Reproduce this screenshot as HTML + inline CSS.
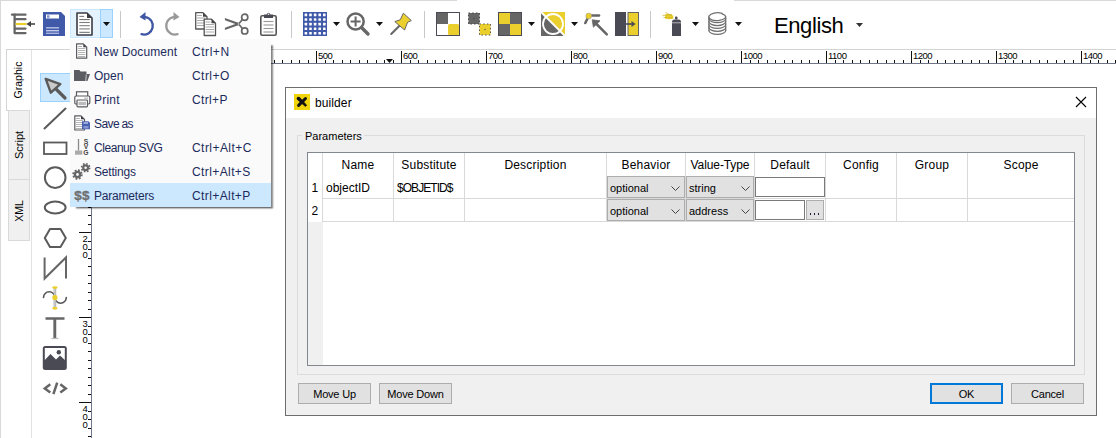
<!DOCTYPE html>
<html><head><meta charset="utf-8">
<style>
html,body{margin:0;padding:0;}
body{width:1116px;height:438px;overflow:hidden;background:#fff;position:relative;font-family:"Liberation Sans",sans-serif;font-size:12px;color:#000;}
.abs{position:absolute;}
div,span{box-sizing:border-box;}
.t{position:absolute;white-space:nowrap;line-height:1;}
svg{position:absolute;overflow:visible;}
.vt{font-size:11px;transform:translate(-50%,-50%) rotate(-90deg);transform-origin:center center;}
.rl{font-size:9.5px;color:#000;letter-spacing:-0.5px;}
.mi{font-size:12px;line-height:12px;color:#1c2a5c;}
.tah{font-size:11px;line-height:12px;}
.hd{font-size:12px;line-height:14px;text-align:center;letter-spacing:0.2px;}
.cell{font-size:12px;line-height:14px;}
.cb{background:#e1e1e1;border:1px solid #adadad;}
.bt{text-align:center;letter-spacing:-0.2px;}
</style></head><body>
<!-- window frame edges -->
<div class="abs" style="left:0;top:0;width:1px;height:438px;background:#d9d9d9"></div>

<!-- TOOLBAR placeholder -->
<div id="toolbar">
<!-- top edge lines -->
<div class="abs" style="left:0;top:0;width:457px;height:1px;background:#d9d9d9"></div>
<div class="abs" style="left:734px;top:0;width:382px;height:1px;background:#d9d9d9"></div>
<!-- toolbar separators -->
<div class="abs" style="left:120px;top:11px;width:1px;height:27px;background:#c9c9c9"></div>
<div class="abs" style="left:291px;top:11px;width:1px;height:27px;background:#c9c9c9"></div>
<div class="abs" style="left:424px;top:11px;width:1px;height:27px;background:#c9c9c9"></div>
<div class="abs" style="left:650px;top:11px;width:1px;height:27px;background:#c9c9c9"></div>

<!-- icon1: align list -->
<svg style="left:11px;top:12px" width="25" height="24" viewBox="0 0 25 24">
 <g stroke="#666" stroke-width="2.300" stroke-linecap="round" fill="none">
  <path d="M1 2.7H14.5"/><path d="M4 7.2H14.5"/><path d="M4 16.6H14.5"/><path d="M4 21.1H14.5"/><path d="M3.6 2.7V21.1"/>
 </g>
 <path d="M4.5 12H15.5" stroke="#ebcf2c" stroke-width="2.2" fill="none"/>
 <path d="M15.3 12L20 9V15Z" fill="#444"/><path d="M19 12H24" stroke="#444" stroke-width="1.6"/>
</svg>
<!-- icon2: save -->
<svg style="left:43px;top:12px" width="22" height="24" viewBox="0 0 22 24">
 <path d="M0 0H18L22 4V24H0Z" fill="#4059a9"/>
 <rect x="3" y="2.5" width="13" height="4" fill="#fff"/><rect x="4" y="3.3" width="2.5" height="2.5" fill="#7f92cc"/>
 <rect x="3" y="15" width="13" height="1.6" fill="#aab6e0"/><rect x="3" y="18" width="13" height="1.4" fill="#c5cdea"/><rect x="3" y="20.6" width="13" height="1.4" fill="#aab6e0"/>
</svg>
<!-- doc split button -->
<div class="abs" style="left:70px;top:9px;width:31px;height:29px;background:#e5f3ff;border:1px solid #cce8ff;border-right:none"></div>
<div class="abs" style="left:100px;top:9px;width:13px;height:29px;background:#cce8ff;border:1px solid #99d1ff"></div>
<svg style="left:76px;top:12px" width="17" height="24" viewBox="0 0 17 24">
 <path d="M1 1H11L16 6V23H1Z" fill="#fff" stroke="#3b3b44" stroke-width="1.6" stroke-linejoin="round"/>
 <path d="M11 1L16 6H11Z" fill="#3b3b44"/>
 <g stroke="#808080" stroke-width="1.100"><path d="M3.300 4.400H8.200"/><path d="M3.300 7.600H13.800" stroke="#555" stroke-width="0.900"/><path d="M3.300 10.500H13.800"/><path d="M3.300 13.700H13.800" stroke="#666" stroke-width="0.900"/><path d="M3.300 16.900H13.800" stroke="#999" stroke-width="1.400"/><path d="M3.300 20.300H13.800" stroke="#555" stroke-width="0.900"/></g>
</svg>
<svg style="left:103px;top:22px" width="7" height="4" viewBox="0 0 7 4"><path d="M0 0H7L3.5 4Z" fill="#111"/></svg>

<!-- undo -->
<svg style="left:139px;top:12px" width="16" height="24" viewBox="0 0 16 24">
 <path d="M6.500 5.200A8.750 8.750 0 1 1 2.500 22.200" fill="none" stroke="#3f56a5" stroke-width="2.300" stroke-linecap="round"/>
 <path d="M0.5 5L6.5 0V8.5Z" fill="#3f56a5"/>
</svg>
<!-- redo -->
<svg style="left:164px;top:12px" width="16" height="24" viewBox="0 0 16 24">
 <path d="M9.500 5.200A8.750 8.750 0 1 0 13.500 22.200" fill="none" stroke="#999" stroke-width="2.300" stroke-linecap="round"/>
 <path d="M15.5 5L9.500 0V8.500Z" fill="#999"/>
</svg>
<!-- copy -->
<svg style="left:195px;top:12px" width="21" height="24" viewBox="0 0 21 24">
 <g>
 <path d="M0.700 0.700H8L12 4.700V17H0.700Z" fill="#fff" stroke="#555" stroke-width="1.3" stroke-linejoin="round"/>
 <path d="M8 0.700L12 4.700H8Z" fill="#444"/>
 <g stroke="#aaa" stroke-width="1"><path d="M2 3.500H7"/><path d="M2 6H10.500"/><path d="M2 8.500H10.500"/><path d="M2 11H10.500"/><path d="M2 13.500H10.500"/></g>
 </g>
 <g transform="translate(8.500,6.500)">
 <path d="M0.700 0.700H8L12 4.700V17H0.700Z" fill="#fff" stroke="#555" stroke-width="1.3" stroke-linejoin="round"/>
 <path d="M8 0.700L12 4.700H8Z" fill="#444"/>
 <g stroke="#aaa" stroke-width="1"><path d="M2 3.500H7"/><path d="M2 6H10.500"/><path d="M2 8.500H10.500"/><path d="M2 11H10.500"/><path d="M2 13.500H10.500"/></g>
 </g>
</svg>
<!-- scissors -->
<svg style="left:224px;top:13px" width="25" height="22" viewBox="0 0 25 22">
 <g fill="none" stroke="#666" stroke-width="1.700">
 <circle cx="20.700" cy="4.200" r="3.100"/><circle cx="20.700" cy="17.900" r="3.100"/>
 </g>
 <path d="M0.800 5.100L15.800 10.300L14.600 12.300L1 7.200Z" fill="#666"/>
 <path d="M0.800 16.900L15.800 11.700L14.600 9.700L1 14.800Z" fill="#666"/>
 <path d="M14.800 10.800L18.600 6.300M14.800 11.200L18.600 15.700" stroke="#666" stroke-width="1.700" fill="none"/>
 <circle cx="14.600" cy="11" r="0.700" fill="#ddd"/>
</svg>
<!-- clipboard -->
<svg style="left:260px;top:12px" width="17" height="24" viewBox="0 0 17 24">
 <rect x="0.800" y="3.800" width="15.400" height="19.400" rx="1.500" fill="#fff" stroke="#555" stroke-width="1.600"/>
 <path d="M4 2.500H6.500Q8.500 -1 10.500 2.500H13V6H4Z" fill="#4a4a55"/>
 <circle cx="8.500" cy="2.300" r="0.800" fill="#fff"/>
 <g stroke="#999" stroke-width="1.100"><path d="M3.500 9.500H13.500"/><path d="M3.500 13H13.500"/><path d="M3.500 16.500H13.500"/><path d="M3.500 20H13.500"/></g>
</svg>
<!-- grid -->
<svg style="left:303px;top:12px" width="24" height="24" viewBox="0 0 24 24">
 <rect width="24" height="24" fill="#4059a9"/>
 <rect x="1.6" y="1.6" width="2.6" height="2.6" rx="0.5" fill="#fff"/><rect x="1.6" y="6.2" width="2.6" height="2.6" rx="0.5" fill="#fff"/><rect x="1.6" y="10.8" width="2.6" height="2.6" rx="0.5" fill="#fff"/><rect x="1.6" y="15.4" width="2.6" height="2.6" rx="0.5" fill="#fff"/><rect x="1.6" y="20.0" width="2.6" height="2.6" rx="0.5" fill="#fff"/><rect x="6.2" y="1.6" width="2.6" height="2.6" rx="0.5" fill="#fff"/><rect x="6.2" y="6.2" width="2.6" height="2.6" rx="0.5" fill="#fff"/><rect x="6.2" y="10.8" width="2.6" height="2.6" rx="0.5" fill="#fff"/><rect x="6.2" y="15.4" width="2.6" height="2.6" rx="0.5" fill="#fff"/><rect x="6.2" y="20.0" width="2.6" height="2.6" rx="0.5" fill="#fff"/><rect x="10.8" y="1.6" width="2.6" height="2.6" rx="0.5" fill="#fff"/><rect x="10.8" y="6.2" width="2.6" height="2.6" rx="0.5" fill="#fff"/><rect x="10.8" y="10.8" width="2.6" height="2.6" rx="0.5" fill="#fff"/><rect x="10.8" y="15.4" width="2.6" height="2.6" rx="0.5" fill="#fff"/><rect x="10.8" y="20.0" width="2.6" height="2.6" rx="0.5" fill="#fff"/><rect x="15.4" y="1.6" width="2.6" height="2.6" rx="0.5" fill="#fff"/><rect x="15.4" y="6.2" width="2.6" height="2.6" rx="0.5" fill="#fff"/><rect x="15.4" y="10.8" width="2.6" height="2.6" rx="0.5" fill="#fff"/><rect x="15.4" y="15.4" width="2.6" height="2.6" rx="0.5" fill="#fff"/><rect x="15.4" y="20.0" width="2.6" height="2.6" rx="0.5" fill="#fff"/><rect x="20.0" y="1.6" width="2.6" height="2.6" rx="0.5" fill="#fff"/><rect x="20.0" y="6.2" width="2.6" height="2.6" rx="0.5" fill="#fff"/><rect x="20.0" y="10.8" width="2.6" height="2.6" rx="0.5" fill="#fff"/><rect x="20.0" y="15.4" width="2.6" height="2.6" rx="0.5" fill="#fff"/><rect x="20.0" y="20.0" width="2.6" height="2.6" rx="0.5" fill="#fff"/>
</svg>
<svg style="left:333px;top:22px" width="7" height="4" viewBox="0 0 7 4"><path d="M0 0H7L3.500 4Z" fill="#111"/></svg>
<!-- zoom -->
<svg style="left:346px;top:12px" width="24" height="24" viewBox="0 0 24 24">
 <circle cx="9.600" cy="9.500" r="8.100" fill="none" stroke="#666" stroke-width="2.500"/>
 <path d="M9.600 4.500V14.500M4.600 9.500H14.600" stroke="#666" stroke-width="2" fill="none"/>
 <path d="M15.500 15.500L22 22" stroke="#666" stroke-width="3.400" stroke-linecap="round"/>
</svg>
<svg style="left:376px;top:22px" width="7" height="4" viewBox="0 0 7 4"><path d="M0 0H7L3.500 4Z" fill="#111"/></svg>
<!-- pin -->
<svg style="left:390px;top:12px" width="23" height="24" viewBox="0 0 23 24">
 <path d="M1.200 22L9.500 13.700" stroke="#666" stroke-width="2" stroke-linecap="round"/>
 <path d="M13.400 1.200L21.300 8.600L17.600 10.200L14.600 18L4.800 9.600L10.200 7.800Z" fill="#ebcf2c" stroke="#666" stroke-width="1" stroke-linejoin="round"/>
</svg>

<!-- icon A: checker white -->
<svg style="left:436px;top:12px" width="24" height="24" viewBox="0 0 24 24">
 <rect x="0.500" y="0.500" width="23" height="23" fill="#fff" stroke="#4a4a55" stroke-width="1"/>
 <rect x="1" y="1" width="11" height="11" fill="#666"/>
 <rect x="12" y="12" width="11" height="11" rx="1.500" fill="#ebcf2c"/>
</svg>
<!-- icon B: two dotted squares -->
<svg style="left:468px;top:12px" width="23" height="24" viewBox="0 0 23 24">
 <rect x="0.500" y="1" width="11" height="11" fill="#666"/>
 <rect x="0.500" y="1" width="11" height="11" fill="none" stroke="#444" stroke-width="1" stroke-dasharray="1.500 2.200"/>
 <rect x="11.500" y="12" width="11" height="11" fill="#ebcf2c"/>
 <rect x="11.500" y="12" width="11" height="11" fill="none" stroke="#555" stroke-width="1" stroke-dasharray="1.500 2.200"/>
 <circle cx="6" cy="6.500" r="0.700" fill="#444"/><circle cx="17" cy="17.500" r="0.700" fill="#555"/>
</svg>
<!-- icon C: checker yellow/grey -->
<svg style="left:498px;top:12px" width="24" height="24" viewBox="0 0 24 24">
 <rect x="0.500" y="0.500" width="23" height="23" fill="#666" stroke="#4a4a55" stroke-width="1"/>
 <rect x="1" y="1" width="11" height="11" fill="#ebcf2c"/>
 <rect x="12" y="12" width="11" height="11" fill="#ebcf2c"/>
</svg>
<svg style="left:528px;top:22px" width="7" height="4" viewBox="0 0 7 4"><path d="M0 0H7L3.500 4Z" fill="#111"/></svg>
<!-- icon D: circle diag -->
<svg style="left:541px;top:12px" width="24" height="24" viewBox="0 0 24 24">
 <path d="M0 0H24V24Z" fill="#ebcf2c"/><path d="M0 0V24H24Z" fill="#666"/>
 <circle cx="12" cy="12" r="10" fill="none" stroke="#fff" stroke-width="1.800"/>
 <path d="M0 0L24 24" stroke="#fff" stroke-width="1.800"/>
</svg>
<svg style="left:571px;top:22px" width="7" height="4" viewBox="0 0 7 4"><path d="M0 0H7L3.500 4Z" fill="#111"/></svg>
<!-- icon E: snap cursor -->
<svg style="left:584px;top:12px" width="24" height="24" viewBox="0 0 24 24">
 <path d="M5 3.500H15" stroke="#666" stroke-width="2.600" stroke-linecap="round"/>
 <path d="M4.500 4.500L1.300 11" stroke="#666" stroke-width="2.600" stroke-linecap="round"/>
 <circle cx="4.700" cy="4" r="2.900" fill="#ebcf2c" stroke="#999" stroke-width="0.500"/>
 <path d="M8.200 7.800L16 8.800L9.400 15.200Z" fill="#666" stroke="#666" stroke-width="0.800" stroke-linejoin="round"/>
 <path d="M12 11.500L22.800 22.300" stroke="#666" stroke-width="2.500" stroke-linecap="round"/>
</svg>
<!-- icon F -->
<svg style="left:615px;top:12px" width="24" height="24" viewBox="0 0 24 24">
 <rect x="0" y="0" width="11" height="24" fill="#4a4a55"/>
 <rect x="13" y="0.500" width="10.500" height="23" fill="#ebcf2c" stroke="#666" stroke-width="1"/>
 <path d="M11 12H17" stroke="#4a4a55" stroke-width="1.600"/><path d="M16.500 9L20.500 12L16.500 15Z" fill="#4a4a55"/>
</svg>
<!-- spray -->
<svg style="left:662px;top:12px" width="20" height="24" viewBox="0 0 20 24">
 <path d="M3 2.500Q8 1 11 3.500L11.500 6.500Q7 8 3 6.500Z" fill="#ebcf2c"/>
 <g stroke="#c9b124" stroke-width="0.700" fill="none"><path d="M0.500 3.500L10 2.500"/><path d="M1.500 5.500L11 5.800"/><path d="M3.500 0.500L10 4"/></g>
 <rect x="13" y="4.500" width="2.500" height="3" rx="1" fill="#4a4a55"/>
 <path d="M10 10Q10 7.500 12.500 7.500H16.500Q19 7.500 19 10V24H10Z" fill="#4a4a55"/>
 <path d="M10 10.800H19" stroke="#fff" stroke-width="0.600"/>
</svg>
<svg style="left:692px;top:22px" width="7" height="4" viewBox="0 0 7 4"><path d="M0 0H7L3.500 4Z" fill="#111"/></svg>
<!-- spring -->
<svg style="left:708px;top:12px" width="19" height="24" viewBox="0 0 19 24">
 <g fill="none" stroke="#707070" stroke-width="1.250" stroke-linecap="round">
  <path d="M14.200 1.300Q8 -0.500 3 2.200Q-0.500 4.300 1.500 6.500Q4.500 9.300 11 8.400Q17.500 7.200 17.700 4.800Q17.500 2.800 14 1.800"/>
  <path d="M0.900 6.7A8.400 3.900 0 0 0 17.700 6.7"/><path d="M0.900 9.6A8.400 3.900 0 0 0 17.700 9.6"/><path d="M0.900 12.5A8.400 3.900 0 0 0 17.700 12.5"/><path d="M0.900 15.4A8.400 3.900 0 0 0 17.700 15.4"/><path d="M0.900 18.5A8.400 3.900 0 0 0 17.700 18.5"/>
  <path d="M0.900 4.800V18.500M17.700 4.800V18.500"/>
 </g>
</svg>
<svg style="left:735px;top:22px" width="7" height="4" viewBox="0 0 7 4"><path d="M0 0H7L3.500 4Z" fill="#111"/></svg>
<!-- English -->
<div class="t" id="eng" style="left:774px;top:14px;font-size:22px;line-height:24px;letter-spacing:-0.4px;">English</div>
<svg style="left:856px;top:23px" width="7" height="4" viewBox="0 0 7 4"><path d="M0 0H7L3.500 4Z" fill="#333"/></svg>

</div>

<!-- LEFT TABS -->
<div id="tabs">
<!-- pane border line (top) -->
<div class="abs" style="left:6px;top:49px;width:1110px;height:1px;background:#d4d4d4"></div>
<!-- pane left border -->
<div class="abs" style="left:31px;top:50px;width:1px;height:388px;background:#e2e2e2"></div>
<!-- Graphic tab (selected) -->
<div class="abs" style="left:6px;top:49px;width:24px;height:62px;background:#fff;border:1px solid #d4d4d4;border-right:none"></div>
<!-- Script tab -->
<div class="abs" style="left:8px;top:110px;width:22px;height:70px;background:#f0f0f0;border:1px solid #d9d9d9;"></div>
<!-- XML tab -->
<div class="abs" style="left:8px;top:179px;width:22px;height:62px;background:#f0f0f0;border:1px solid #d9d9d9;"></div>
<div class="t vt" style="left:18.300px;top:79.500px;font-size:10.500px">Graphic</div>
<div class="t vt" style="left:18.700px;top:144.500px;">Script</div>
<div class="t vt" style="left:19px;top:211px;font-size:10.5px">XML</div>
</div>

<!-- RULERS -->
<div id="rulers"><div class="abs" style="left:78px;top:63px;width:1038px;height:1px;background:#70758a"></div>
<div class="abs" style="left:91px;top:63px;width:1px;height:375px;background:#70758a"></div>
<svg style="left:0;top:0" width="1116" height="70" viewBox="0 0 1116 70" shape-rendering="crispEdges"><g stroke="#111" stroke-width="1"><path d="M95.5 60V63"/><path d="M104.5 60V63"/><path d="M112.5 60V63"/><path d="M121.5 60V63"/><path d="M129.5 60V63"/><path d="M138.5 60V63"/><path d="M146.5 51V63"/><path d="M155.5 60V63"/><path d="M163.5 60V63"/><path d="M172.5 60V63"/><path d="M180.5 60V63"/><path d="M189.5 60V63"/><path d="M197.5 60V63"/><path d="M206.5 60V63"/><path d="M214.5 60V63"/><path d="M223.5 60V63"/><path d="M231.5 51V63"/><path d="M240.5 60V63"/><path d="M248.5 60V63"/><path d="M257.5 60V63"/><path d="M265.5 60V63"/><path d="M274.5 60V63"/><path d="M282.5 60V63"/><path d="M291.5 60V63"/><path d="M299.5 60V63"/><path d="M308.5 60V63"/><path d="M316.5 51V63"/><path d="M325.5 60V63"/><path d="M333.5 60V63"/><path d="M342.5 60V63"/><path d="M350.5 60V63"/><path d="M359.5 60V63"/><path d="M367.5 60V63"/><path d="M376.5 60V63"/><path d="M384.5 60V63"/><path d="M393.5 60V63"/><path d="M401.5 51V63"/><path d="M410.5 60V63"/><path d="M418.5 60V63"/><path d="M427.5 60V63"/><path d="M435.5 60V63"/><path d="M444.5 60V63"/><path d="M452.5 60V63"/><path d="M461.5 60V63"/><path d="M469.5 60V63"/><path d="M478.5 60V63"/><path d="M486.5 51V63"/><path d="M495.5 60V63"/><path d="M503.5 60V63"/><path d="M512.5 60V63"/><path d="M520.5 60V63"/><path d="M529.5 60V63"/><path d="M537.5 60V63"/><path d="M546.5 60V63"/><path d="M554.5 60V63"/><path d="M563.5 60V63"/><path d="M571.5 51V63"/><path d="M580.5 60V63"/><path d="M588.5 60V63"/><path d="M597.5 60V63"/><path d="M605.5 60V63"/><path d="M614.5 60V63"/><path d="M622.5 60V63"/><path d="M631.5 60V63"/><path d="M639.5 60V63"/><path d="M648.5 60V63"/><path d="M656.5 51V63"/><path d="M665.5 60V63"/><path d="M673.5 60V63"/><path d="M682.5 60V63"/><path d="M690.5 60V63"/><path d="M699.5 60V63"/><path d="M707.5 60V63"/><path d="M716.5 60V63"/><path d="M724.5 60V63"/><path d="M733.5 60V63"/><path d="M741.5 51V63"/><path d="M750.5 60V63"/><path d="M758.5 60V63"/><path d="M767.5 60V63"/><path d="M775.5 60V63"/><path d="M784.5 60V63"/><path d="M792.5 60V63"/><path d="M801.5 60V63"/><path d="M809.5 60V63"/><path d="M818.5 60V63"/><path d="M826.5 51V63"/><path d="M835.5 60V63"/><path d="M843.5 60V63"/><path d="M852.5 60V63"/><path d="M860.5 60V63"/><path d="M869.5 60V63"/><path d="M877.5 60V63"/><path d="M886.5 60V63"/><path d="M894.5 60V63"/><path d="M903.5 60V63"/><path d="M911.5 51V63"/><path d="M920.5 60V63"/><path d="M928.5 60V63"/><path d="M937.5 60V63"/><path d="M945.5 60V63"/><path d="M954.5 60V63"/><path d="M962.5 60V63"/><path d="M971.5 60V63"/><path d="M979.5 60V63"/><path d="M988.5 60V63"/><path d="M996.5 51V63"/><path d="M1005.5 60V63"/><path d="M1013.5 60V63"/><path d="M1022.5 60V63"/><path d="M1030.5 60V63"/><path d="M1039.5 60V63"/><path d="M1047.5 60V63"/><path d="M1056.5 60V63"/><path d="M1064.5 60V63"/><path d="M1073.5 60V63"/><path d="M1081.5 51V63"/><path d="M1090.5 60V63"/><path d="M1098.5 60V63"/><path d="M1107.5 60V63"/><path d="M1115.5 60V63"/></g></svg>
<div class="t rl" style="left:318px;top:51px;">500</div>
<div class="t rl" style="left:403px;top:51px;">600</div>
<div class="t rl" style="left:488px;top:51px;">700</div>
<div class="t rl" style="left:573px;top:51px;">800</div>
<div class="t rl" style="left:658px;top:51px;">900</div>
<div class="t rl" style="left:743px;top:51px;">1000</div>
<div class="t rl" style="left:828px;top:51px;">1100</div>
<div class="t rl" style="left:913px;top:51px;">1200</div>
<div class="t rl" style="left:998px;top:51px;">1300</div>
<div class="t rl" style="left:1083px;top:51px;">1400</div>
<svg style="left:386px;top:59px" width="7" height="4" viewBox="0 0 7 4"><path d="M0 0H7L3.500 4Z" fill="#111"/></svg>
<svg style="left:0;top:0" width="100" height="438" viewBox="0 0 100 438" shape-rendering="crispEdges"><g stroke="#111" stroke-width="1"><path d="M79 62.5H91"/><path d="M88 71.5H91"/><path d="M88 79.5H91"/><path d="M88 88.5H91"/><path d="M88 96.5H91"/><path d="M88 105.5H91"/><path d="M88 113.5H91"/><path d="M88 122.5H91"/><path d="M88 130.5H91"/><path d="M88 139.5H91"/><path d="M79 147.5H91"/><path d="M88 156.5H91"/><path d="M88 164.5H91"/><path d="M88 173.5H91"/><path d="M88 181.5H91"/><path d="M88 190.5H91"/><path d="M88 198.5H91"/><path d="M88 207.5H91"/><path d="M88 215.5H91"/><path d="M88 224.5H91"/><path d="M79 232.5H91"/><path d="M88 241.5H91"/><path d="M88 249.5H91"/><path d="M88 258.5H91"/><path d="M88 266.5H91"/><path d="M88 275.5H91"/><path d="M88 283.5H91"/><path d="M88 292.5H91"/><path d="M88 300.5H91"/><path d="M88 309.5H91"/><path d="M79 317.5H91"/><path d="M88 326.5H91"/><path d="M88 334.5H91"/><path d="M88 343.5H91"/><path d="M88 351.5H91"/><path d="M88 360.5H91"/><path d="M88 368.5H91"/><path d="M88 377.5H91"/><path d="M88 385.5H91"/><path d="M88 394.5H91"/><path d="M79 402.5H91"/><path d="M88 411.5H91"/><path d="M88 419.5H91"/><path d="M88 428.5H91"/><path d="M88 436.5H91"/></g></svg>
<div class="t rl" style="left:82px;top:150.0px;line-height:8px;white-space:normal;width:6px;text-align:center">1<br>0<br>0</div>
<div class="t rl" style="left:82px;top:235.0px;line-height:8px;white-space:normal;width:6px;text-align:center">2<br>0<br>0</div>
<div class="t rl" style="left:82px;top:320.0px;line-height:8px;white-space:normal;width:6px;text-align:center">3<br>0<br>0</div>
<div class="t rl" style="left:82px;top:405.0px;line-height:8px;white-space:normal;width:6px;text-align:center">4<br>0<br>0</div></div>

<!-- LEFT TOOLS -->
<div id="tools">
<!-- selected tool highlight -->
<div class="abs" style="left:40px;top:73px;width:32px;height:29px;background:#cce8ff;border:1px solid #99d1ff"></div>
<svg style="left:0;top:0" width="80" height="438" viewBox="0 0 80 438">
 <!-- arrow -->
 <path d="M55.500 88.500L65 98" stroke="#5a5a5a" stroke-width="3.200" stroke-linecap="round"/>
 <path d="M45.700 78.900L60.300 84.200L50.800 92.700Z" fill="#cacaca" stroke="#5a5a5a" stroke-width="2.400" stroke-linejoin="round"/>
 <!-- line -->
 <path d="M44.500 128.500L65.500 108.500" stroke="#5a5a5a" stroke-width="2" stroke-linecap="round"/>
 <!-- rect -->
 <rect x="44" y="142.500" width="22.500" height="11.500" fill="none" stroke="#5a5a5a" stroke-width="1.800"/>
 <!-- circle -->
 <circle cx="55.200" cy="177.600" r="10.300" fill="none" stroke="#5a5a5a" stroke-width="2"/>
 <!-- ellipse -->
 <ellipse cx="55.200" cy="207.500" rx="10.400" ry="5.900" fill="none" stroke="#5a5a5a" stroke-width="2"/>
 <!-- hexagon -->
 <path d="M44.800 238L50 229H60.500L65.800 238L60.500 247H50Z" fill="none" stroke="#5a5a5a" stroke-width="2" stroke-linejoin="round"/>
 <!-- polyline N -->
 <path d="M44.600 257.500V278.500L66 257.500V278.500" fill="none" stroke="#666" stroke-width="2" stroke-linejoin="miter" stroke-linecap="butt"/>
 <!-- curve -->
 <path d="M43.500 297.500A5.700 5.700 0 0 1 54.900 297.500A5.700 5.700 0 0 0 66.300 297.500" fill="none" stroke="#555" stroke-width="1.600" stroke-linecap="round"/>
 <path d="M54.900 288V308" stroke="#aaa" stroke-width="2.600"/><path d="M54.900 288V308" stroke="#e4e4e4" stroke-width="0.800"/>
 <ellipse cx="54.900" cy="287.600" rx="2.700" ry="1.400" fill="#ebcf2c"/>
 <ellipse cx="54.900" cy="308.300" rx="2.700" ry="1.400" fill="#ebcf2c"/>
 <circle cx="54.900" cy="297.500" r="2.600" fill="#ebcf2c"/>
 <!-- T -->
 <path d="M45.500 318.500H64.500" stroke="#666" stroke-width="2.500"/>
 <path d="M54.800 318V338" stroke="#666" stroke-width="2.900"/>
 <path d="M51.500 338.500H58.500" stroke="#bbb" stroke-width="1.200"/>
 <!-- image -->
 <rect x="42.800" y="346" width="24" height="24" rx="2.500" fill="#4a4a55"/>
 <path d="M44.800 348H64.800V360L60 355.500L56 359.500L50.500 354L44.800 360Z" fill="#fff"/>
 <circle cx="58.800" cy="352.300" r="2.200" fill="#4a4a55"/>
 <!-- code -->
 <g fill="none" stroke="#666" stroke-width="2.500" stroke-linejoin="miter">
  <path d="M50.300 384.300L44.800 388.400L50.300 392.500"/>
  <path d="M60.300 384.300L65.800 388.400L60.300 392.500"/>
  <path d="M57.200 382.600L53.400 394.200"/>
 </g>
</svg>
</div>

<!-- MENU -->
<div id="menu">
<div class="abs" style="left:70px;top:39px;width:201px;height:168px;background:#fafafa;box-shadow:4px 3.500px 1.600px -2px rgba(0,0,0,0.550);"></div>
<div class="abs" style="left:70px;top:183px;width:201px;height:24px;background:#cce8ff"></div>
<div class="t mi" style="left:94px;top:46px;letter-spacing:0.1px;">New Document</div><div class="t mi" style="left:192px;top:46px;letter-spacing:0.55px">Ctrl+N</div>
<div class="t mi" style="left:94px;top:70px;letter-spacing:0px;">Open</div><div class="t mi" style="left:192px;top:70px;letter-spacing:0.45px">Ctrl+O</div>
<div class="t mi" style="left:94px;top:94px;letter-spacing:0.2px;">Print</div><div class="t mi" style="left:192px;top:94px;letter-spacing:0.35px">Ctrl+P</div>
<div class="t mi" style="left:94px;top:118px;letter-spacing:-0.55px;word-spacing:-0.5px;">Save as</div>
<div class="t mi" style="left:94px;top:142px;letter-spacing:-0.45px;">Cleanup SVG</div><div class="t mi" style="left:192px;top:142px;letter-spacing:0.45px">Ctrl+Alt+C</div>
<div class="t mi" style="left:94px;top:166px;letter-spacing:-0.2px;">Settings</div><div class="t mi" style="left:192px;top:166px;letter-spacing:0.4px">Ctrl+Alt+S</div>
<div class="t mi" style="left:94px;top:190px;letter-spacing:-0.2px;">Parameters</div><div class="t mi" style="left:192px;top:190px;letter-spacing:0.4px">Ctrl+Alt+P</div>

<svg style="left:70px;top:39px" width="24" height="168" viewBox="0 0 24 168">
 <!-- new doc -->
 <path d="M6.600 4.800H13.300L16.700 8.200V19.200H6.600Z" fill="#fff" stroke="#5a5a60" stroke-width="1.200" stroke-linejoin="round"/>
 <path d="M13.300 4.800L16.700 8.200H13.300Z" fill="#3f3f48"/>
 <g stroke="#aaa" stroke-width="0.900"><path d="M8 7.500H12"/><path d="M8 9.500H15.300"/><path d="M8 11.500H15.300"/><path d="M8 13.500H15.300"/><path d="M8 15.500H15.300"/><path d="M8 17.500H15.300"/></g>
 <!-- folder -->
 <path d="M4 31H9.500L10.500 32.500H16.500V35H20L17.500 42H4Z" fill="#5c5c63"/>
 <path d="M16.500 35.500H20L17.600 42" fill="none" stroke="#fafafa" stroke-width="0" />
 <path d="M16.300 35.400L15.800 42" stroke="#fafafa" stroke-width="0.700"/>
 <!-- printer -->
 <rect x="6.500" y="52.800" width="11.200" height="5" fill="#fff" stroke="#5a5a60" stroke-width="1.200"/>
 <rect x="4.800" y="57" width="15" height="8" rx="1.200" fill="#fff" stroke="#5a5a60" stroke-width="1.200"/>
 <rect x="7" y="61" width="10.500" height="6.800" rx="0.800" fill="#fff" stroke="#5a5a60" stroke-width="1.200"/>
 <rect x="8.500" y="62.800" width="7.500" height="3.400" fill="#bbb"/>
 <rect x="14.600" y="58.600" width="1" height="1" fill="#5a5a60"/><rect x="16.600" y="58.600" width="1" height="1" fill="#5a5a60"/>
 <!-- save as -->
 <path d="M4.800 76.800H11L14.500 80.300V91H4.800Z" fill="#fff" stroke="#5a5a60" stroke-width="1.200" stroke-linejoin="round"/>
 <path d="M11 76.800L14.500 80.300H11Z" fill="#3f3f48"/>
 <g stroke="#aaa" stroke-width="0.900"><path d="M6 79.500H10"/><path d="M6 81.500H13"/><path d="M6 83.500H13"/><path d="M6 85.500H13"/><path d="M6 87.500H13"/><path d="M6 89.500H13"/></g>
 <path d="M12 82.300H18.500L20 83.800V90.300H12Z" fill="#4a60b0"/>
 <rect x="13.500" y="83" width="4.500" height="2" fill="#9aa8da"/><rect x="13.500" y="87" width="5" height="2.500" fill="#8596d2"/>
 <!-- cleanup svg -->
 <path d="M8.500 100V111.500" stroke="#8a8a8a" stroke-width="1.300"/>
 <rect x="5" y="111.500" width="7.300" height="4.200" fill="#aaa"/>
 <text x="16" y="104.600" font-family="Liberation Sans, sans-serif" font-weight="bold" font-size="6.800px" text-anchor="middle" fill="#444">S</text>
 <text x="16" y="110.200" font-family="Liberation Sans, sans-serif" font-weight="bold" font-size="6.800px" text-anchor="middle" fill="#444">V</text>
 <text x="16" y="115.800" font-family="Liberation Sans, sans-serif" font-weight="bold" font-size="6.800px" text-anchor="middle" fill="#444">G</text>
 <!-- gears -->
 <g fill="none" stroke="#666">
  <circle cx="7.500" cy="135.500" r="2.600" stroke-width="2.400"/>
  <circle cx="7.500" cy="135.500" r="4.300" stroke-width="1.900" stroke-dasharray="1.800 1.577"/>
  <circle cx="15.600" cy="128.700" r="2.400" stroke-width="2.200"/>
  <circle cx="15.600" cy="128.700" r="4" stroke-width="1.700" stroke-dasharray="1.600 1.540"/>
 </g>
 <!-- $$ -->
 <text x="4.200" y="160.600" font-family="Liberation Sans, sans-serif" font-weight="bold" font-size="13.500px" fill="#707070" stroke="#707070" stroke-width="0.350" letter-spacing="0.200">$$</text>
</svg>

</div>

<!-- DIALOG -->
<div id="dialog"><div class="abs" style="left:285px;top:87px;width:812px;height:329px;background:#f0f0f0;border:1px solid #6e6e6e"></div>
<div class="abs" style="left:286px;top:88px;width:810px;height:30px;background:#fff"></div>
<svg style="left:294px;top:94px" width="16" height="16" viewBox="0 0 16 16"><rect width="16" height="16" fill="#f0d40c"/>
<path d="M4.600 11.400L11.500 4.500" stroke="#111" stroke-width="3" stroke-linecap="round"/>
<path d="M3.400 5.600L5.600 3.400L12.600 11.200L11.400 12.400Z" fill="#111" stroke="#111" stroke-width="0.800" stroke-linejoin="round"/>
<circle cx="4.400" cy="4.400" r="1.700" fill="#111"/></svg>
<div class="t" style="left:315px;top:96px;font-size:12px;line-height:14px;letter-spacing:0.100px">builder</div>
<svg style="left:1076px;top:97px" width="10" height="10" viewBox="0 0 10 10"><path d="M0 0L10 10M10 0L0 10" stroke="#000" stroke-width="1.100" fill="none"/></svg>
<div class="abs" style="left:297px;top:135px;width:788px;height:240px;border:1px solid #dcdcdc;"></div>
<div class="t" style="left:302px;top:129px;height:13px;width:62px;background:#f0f0f0"></div>
<div class="t tah" style="left:305px;top:130px;">Parameters</div>
<div class="abs" style="left:307px;top:152px;width:768px;height:214px;background:#fff;border:1px solid #828790"></div>
<div class="abs" style="left:308px;top:222px;width:15px;height:143px;background:#f0f0f0"></div>
<div class="abs" style="left:322px;top:153px;width:1px;height:69px;background:#d9d9d9"></div>
<div class="abs" style="left:393px;top:153px;width:1px;height:69px;background:#d9d9d9"></div>
<div class="abs" style="left:464px;top:153px;width:1px;height:69px;background:#d9d9d9"></div>
<div class="abs" style="left:606px;top:153px;width:1px;height:69px;background:#d9d9d9"></div>
<div class="abs" style="left:685px;top:153px;width:1px;height:69px;background:#d9d9d9"></div>
<div class="abs" style="left:754px;top:153px;width:1px;height:69px;background:#d9d9d9"></div>
<div class="abs" style="left:825px;top:153px;width:1px;height:69px;background:#d9d9d9"></div>
<div class="abs" style="left:896px;top:153px;width:1px;height:69px;background:#d9d9d9"></div>
<div class="abs" style="left:967px;top:153px;width:1px;height:69px;background:#d9d9d9"></div>
<div class="abs" style="left:322px;top:198px;width:752px;height:1px;background:#d9d9d9"></div>
<div class="abs" style="left:322px;top:221px;width:752px;height:1px;background:#d9d9d9"></div>
<div class="t hd" style="left:323px;width:70px;top:158px;">Name</div>
<div class="t hd" style="left:394px;width:70px;top:158px;">Substitute</div>
<div class="t hd" style="left:465px;width:141px;top:158px;">Description</div>
<div class="t hd" style="left:607px;width:78px;top:158px;">Behavior</div>
<div class="t hd" style="left:686px;width:68px;top:158px;letter-spacing:-0.1px">Value-Type</div>
<div class="t hd" style="left:755px;width:70px;top:158px;">Default</div>
<div class="t hd" style="left:826px;width:70px;top:158px;">Config</div>
<div class="t hd" style="left:897px;width:70px;top:158px;">Group</div>
<div class="t hd" style="left:968px;width:106px;top:158px;">Scope</div>
<div class="t hd" style="left:308px;width:14px;top:181px;">1</div>
<div class="t hd" style="left:308px;width:14px;top:204px;">2</div>
<div class="t cell" style="left:326px;top:181px;">objectID</div>
<div class="t cell" style="left:397px;top:181px;letter-spacing:-0.95px">$OBJETID$</div>
<div class="abs cb" style="left:607px;top:176px;width:78px;height:22px;"></div>
<div class="abs cb" style="left:686px;top:176px;width:68px;height:22px;"></div>
<svg style="left:671px;top:186px" width="9" height="5" viewBox="0 0 9 5"><path d="M0.500 0.500L4.500 4.500L8.500 0.500" fill="none" stroke="#444" stroke-width="1"/></svg>
<svg style="left:741px;top:186px" width="9" height="5" viewBox="0 0 9 5"><path d="M0.500 0.500L4.500 4.500L8.500 0.500" fill="none" stroke="#444" stroke-width="1"/></svg>
<div class="t tah" style="left:610px;top:182px;">optional</div>
<div class="abs cb" style="left:607px;top:199px;width:78px;height:22px;"></div>
<div class="abs cb" style="left:686px;top:199px;width:68px;height:22px;"></div>
<svg style="left:671px;top:209px" width="9" height="5" viewBox="0 0 9 5"><path d="M0.500 0.500L4.500 4.500L8.500 0.500" fill="none" stroke="#444" stroke-width="1"/></svg>
<svg style="left:741px;top:209px" width="9" height="5" viewBox="0 0 9 5"><path d="M0.500 0.500L4.500 4.500L8.500 0.500" fill="none" stroke="#444" stroke-width="1"/></svg>
<div class="t tah" style="left:610px;top:205px;">optional</div>
<div class="t tah" style="left:689px;top:182px;">string</div>
<div class="t tah" style="left:689px;top:205px;">address</div>
<div class="abs" style="left:755px;top:177px;width:70px;height:20px;background:#fff;border:1px solid #7a7a7a"></div>
<div class="abs" style="left:755px;top:200px;width:50px;height:20px;background:#fff;border:1px solid #7a7a7a"></div>
<div class="abs cb" style="left:806px;top:200px;width:18px;height:20px;"></div>
<div class="abs" style="left:810px;top:213px;width:1.300px;height:2px;background:#1a1a3a"></div><div class="abs" style="left:814px;top:213px;width:1.300px;height:2px;background:#1a1a3a"></div><div class="abs" style="left:818px;top:213px;width:1.300px;height:2px;background:#1a1a3a"></div>
<div class="abs cb" style="left:298px;top:383px;width:73px;height:21px;"></div>
<div class="abs cb" style="left:379px;top:383px;width:73px;height:21px;"></div>
<div class="abs cb" style="left:930px;top:383px;width:73px;height:21px;border:2px solid #0078d7"></div>
<div class="abs cb" style="left:1011px;top:383px;width:73px;height:21px;"></div>
<div class="t tah bt" style="left:298px;width:73px;top:388px;">Move Up</div>
<div class="t tah bt" style="left:379px;width:73px;top:388px;">Move Down</div>
<div class="t tah bt" style="left:930px;width:73px;top:388px;">OK</div>
<div class="t tah bt" style="left:1011px;width:73px;top:388px;">Cancel</div></div>
</body></html>
